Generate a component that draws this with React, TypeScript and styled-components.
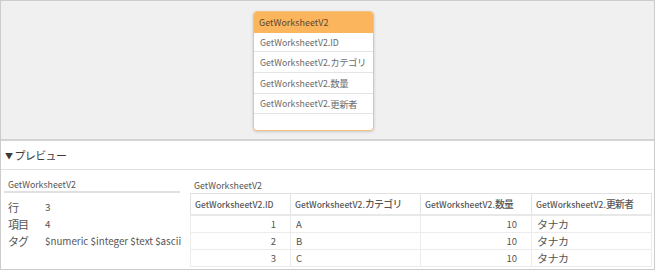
import styled, { createGlobalStyle } from "styled-components";

const GlobalStyle = createGlobalStyle`
    html, body {
        margin: 0;
        padding: 0;
        background: #fff;
    }
    body {
        font-family: "Noto Sans CJK JP", "Noto Sans", sans-serif;
        color: #555;
    }
    * {
        box-sizing: border-box;
    }
`;

const Frame = styled.div`
    width: 655px;
    height: 270px;
    border: 1px solid #cccccc;
    display: flex;
    flex-direction: column;
    overflow: hidden;
`;

const Canvas = styled.div`
    height: 140px;
    flex-shrink: 0;
    background: #f0f0f0;
    border-bottom: 2px solid #d4d4d4;
    padding: 10px 0 0 252px;
`;

const Card = styled.div`
    width: 121px;
    height: 120px;
    background: #fff;
    border: 1px solid #f2c283;
    border-radius: 4px;
    box-shadow: 0 1px 3px rgba(0, 0, 0, 0.16);
    overflow: hidden;
    display: flex;
    flex-direction: column;
`;

const CardHeader = styled.div`
    height: 21px;
    flex-shrink: 0;
    background: #fbb55d;
    font-size: 9px;
    color: #5b4833;
    display: flex;
    align-items: center;
    padding-left: 5px;
`;

const CardRow = styled.div<{ $h: number }>`
    height: ${(p) => p.$h}px;
    flex-shrink: 0;
    border-bottom: 1px solid #e4e4e4;
    font-size: 8.8px;
    color: #6a6a6a;
    display: flex;
    align-items: center;
    padding-left: 6px;
    white-space: nowrap;
`;

const Jp = styled.span<{ $size: number; $spacing: number }>`
    font-size: ${(p) => p.$size}px;
    letter-spacing: ${(p) => p.$spacing}px;
`;

const PreviewBar = styled.div`
    height: 29px;
    flex-shrink: 0;
    border-bottom: 1px solid #e0e0e0;
    display: flex;
    align-items: center;
    padding-left: 4px;
    font-size: 11px;
    letter-spacing: -0.6px;
    color: #3a3a3a;
    gap: 2px;
`;

const Arrow = styled.span`
    font-size: 8px;
`;

const Body = styled.div`
    display: flex;
    padding: 7px 4px 0 3px;
    gap: 10px;
`;

const InfoPanel = styled.div`
    width: 176px;
`;

const PanelTitle = styled.div<{ $underline?: boolean }>`
    font-size: 8.8px;
    color: #555;
    height: 16px;
    padding-left: 4px;
    border-bottom: ${(p) => (p.$underline ? "2px solid #e0e0e0" : "none")};
    display: flex;
    align-items: center;
`;

const InfoList = styled.div`
    padding-top: 5px;
    display: grid;
    grid-template-columns: 37px auto;
    grid-auto-rows: 17px;
    align-items: center;
    padding-left: 4px;
`;

const InfoLabel = styled.span`
    font-size: 11px;
    letter-spacing: -1px;
    color: #555;
`;

const InfoValue = styled.span`
    font-size: 9.8px;
    color: #555;
    white-space: nowrap;
`;

const TablePanel = styled.div`
    flex: 1;
`;

const Table = styled.table`
    border-collapse: collapse;
    table-layout: fixed;
    width: 461px;
    color: #555;
    border: 1px solid #dedede;
`;

const Th = styled.th<{ $w: number }>`
    width: ${(p) => p.$w}px;
    height: 21px;
    font-size: 8.5px;
    font-weight: 500;
    text-align: left;
    padding: 0 4px;
    border: 1px solid #e2e2e2;
    border-bottom: 2px solid #e8e8e8;
    white-space: nowrap;
    overflow: hidden;
`;

const Td = styled.td<{ $num?: boolean }>`
    height: 17px;
    padding: ${(p) => (p.$num ? "0 14px 0 5px" : "0 5px")};
    text-align: ${(p) => (p.$num ? "right" : "left")};
    border: 1px solid #ececec;
    font-size: 9.5px;
`;

const TdJp = styled(Td)`
    font-size: 11px;
    letter-spacing: -0.5px;
`;

const fields = ["ID", "カテゴリ", "数量", "更新者"];
const widths = [100, 130, 111, 120];
const rowHeights = [19, 21, 21, 20];
const rows = [
    { id: 1, cat: "A", qty: 10, user: "タナカ" },
    { id: 2, cat: "B", qty: 10, user: "タナカ" },
    { id: 3, cat: "C", qty: 10, user: "タナカ" },
];

function FieldName({ name, size, spacing }: { name: string; size: number; spacing: number }) {
    const isLatin = /^[A-Za-z]+$/.test(name);
    return (
        <>
            GetWorksheetV2.
            {isLatin ? name : <Jp $size={size} $spacing={spacing}>{name}</Jp>}
        </>
    );
}

function App() {
    return (
        <>
            <GlobalStyle />
            <Frame>
                <Canvas>
                    <Card>
                        <CardHeader>GetWorksheetV2</CardHeader>
                        {fields.map((f, i) => (
                            <CardRow key={f} $h={rowHeights[i]}>
                                <FieldName name={f} size={9.4} spacing={-0.5} />
                            </CardRow>
                        ))}
                    </Card>
                </Canvas>
                <PreviewBar>
                    <Arrow>▼</Arrow>
                    プレビュー
                </PreviewBar>
                <Body>
                    <InfoPanel>
                        <PanelTitle $underline>GetWorksheetV2</PanelTitle>
                        <InfoList>
                            <InfoLabel>行</InfoLabel>
                            <InfoValue>3</InfoValue>
                            <InfoLabel>項目</InfoLabel>
                            <InfoValue>4</InfoValue>
                            <InfoLabel>タグ</InfoLabel>
                            <InfoValue>$numeric $integer $text $ascii</InfoValue>
                        </InfoList>
                    </InfoPanel>
                    <TablePanel>
                        <PanelTitle>GetWorksheetV2</PanelTitle>
                        <Table>
                            <thead>
                                <tr>
                                    {fields.map((f, i) => (
                                        <Th key={f} $w={widths[i]}>
                                            <FieldName name={f} size={9.8} spacing={-0.6} />
                                        </Th>
                                    ))}
                                </tr>
                            </thead>
                            <tbody>
                                {rows.map((r) => (
                                    <tr key={r.id}>
                                        <Td $num>{r.id}</Td>
                                        <Td>{r.cat}</Td>
                                        <Td $num>{r.qty}</Td>
                                        <TdJp>{r.user}</TdJp>
                                    </tr>
                                ))}
                            </tbody>
                        </Table>
                    </TablePanel>
                </Body>
            </Frame>
        </>
    );
}

export default App;
